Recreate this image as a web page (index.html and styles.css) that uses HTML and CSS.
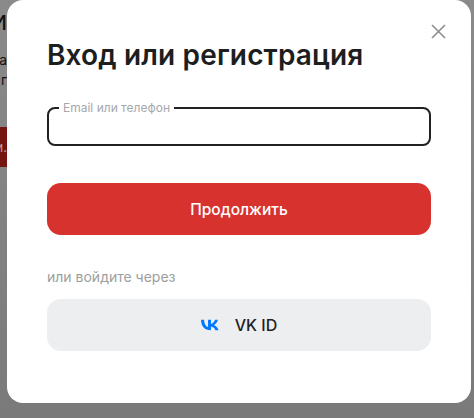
FILE: index.html
```html
<!DOCTYPE html>
<html lang="ru">
<head>
<meta charset="UTF-8">
<meta name="viewport" content="width=device-width, initial-scale=1.0">
<title>Вход или регистрация</title>
<link rel="stylesheet" href="styles.css">
</head>
<body>

<div class="page">
  <div class="behind">
    <div class="behind-title">И</div>
    <div class="behind-text">а</div>
    <div class="behind-text">г</div>
    <div class="behind-btn">и.&lrm;</div>
  </div>

  <div class="modal">
    <div class="modal-top">
      <button class="close" type="button" aria-label="Закрыть">
        <svg width="15" height="15" viewBox="0 0 15 15">
          <path d="M1 1L14 14M14 1L1 14" stroke="#8b8d8f" stroke-width="1.6" fill="none"/>
        </svg>
      </button>
    </div>
    <h1 class="modal-title">Вход или регистрация</h1>
    <fieldset class="field">
      <legend class="field-label">Email или телефон</legend>
      <input class="field-input" type="text" id="login" name="login">
    </fieldset>
    <button class="btn btn-primary" type="button">Продолжить</button>
    <p class="hint">или войдите через</p>
    <button class="btn btn-vk" type="button">
      <svg width="18" height="12" viewBox="0 0 24 14">
        <path fill="#0077ff" d="M13.07 14C4.87 14 .2 8.74 0 0h4.1c.14 6.41 3.02 9.13 5.3 9.69V0h3.87v5.53c2.26-.24 4.64-2.76 5.44-5.53h3.87c-.65 3.41-3.36 5.94-5.29 7 1.93.85 5.02 3.09 6.2 7h-4.26c-.91-2.7-3.19-4.79-5.96-5.03V14h-.47z"/>
      </svg>
      <span>VK ID</span>
    </button>
  </div>
</div>

</body>
</html>
```

FILE: styles.css
```css
/* Login modal over a dimmed page */
body, html {
  margin: 0;
  padding: 0;
  font-family: Inter, "Noto Sans", sans-serif;
}
.page {
  display: flex;
  height: 418px;
  overflow: hidden;
  background: linear-gradient(#8a8a8a, #7a7a7a);
}
.behind {
  width: 7px;
  flex-shrink: 0;
  overflow: hidden;
  padding-top: 8px;
  color: #111;
  white-space: nowrap;
  direction: rtl;
}
.behind-title {
  font-size: 20px;
  line-height: 30px;
  font-weight: 500;
  margin-bottom: 12px;
}
.behind-text {
  font-size: 14px;
  line-height: 20px;
}
.behind-btn {
  margin-top: 37px;
  height: 40px;
  line-height: 40px;
  background-color: #74160f;
  color: #b9a09f;
  font-size: 13px;
}
.modal {
  width: 464px;
  height: 403px;
  flex-shrink: 0;
  box-sizing: border-box;
  padding: 0 40px;
  background-color: #fff;
  border-radius: 16px;
}
.modal-top {
  display: flex;
  justify-content: flex-end;
  padding-top: 24px;
  height: 15px;
  margin-right: -15px;
}
.close {
  padding: 0;
  border: none;
  background: none;
  width: 15px;
  height: 15px;
  display: block;
}
.modal-title {
  margin: 0;
  font-size: 28px;
  line-height: 32px;
  letter-spacing: 0.15px;
  font-weight: 600;
  color: #1c1e20;
}
.field {
  margin: 31px 0 0;
  padding: 0 10px;
  height: 44px;
  box-sizing: border-box;
  border: 2px solid #1f2123;
  border-radius: 8px;
}
.field-label {
  padding: 0 4px;
  font-size: 12px;
  line-height: 12px;
  color: #a6a8aa;
}
.field-input {
  display: block;
  width: 100%;
  border: none;
  outline: none;
  padding: 0;
  background: none;
}
.btn {
  display: flex;
  align-items: center;
  justify-content: center;
  width: 100%;
  height: 52px;
  border: none;
  border-radius: 14px;
  font-family: inherit;
  font-size: 15.5px;
  font-weight: 500;
}
.btn-primary {
  margin-top: 37px;
  background-color: #d8322f;
  color: #fff;
}
.hint {
  margin: 33px 0 0;
  font-size: 14px;
  line-height: 18px;
  color: #9c9ea0;
}
.btn-vk {
  margin-top: 13px;
  gap: 16px;
  background-color: #eceef0;
  color: #1f2123;
  font-size: 16px;
}
```
